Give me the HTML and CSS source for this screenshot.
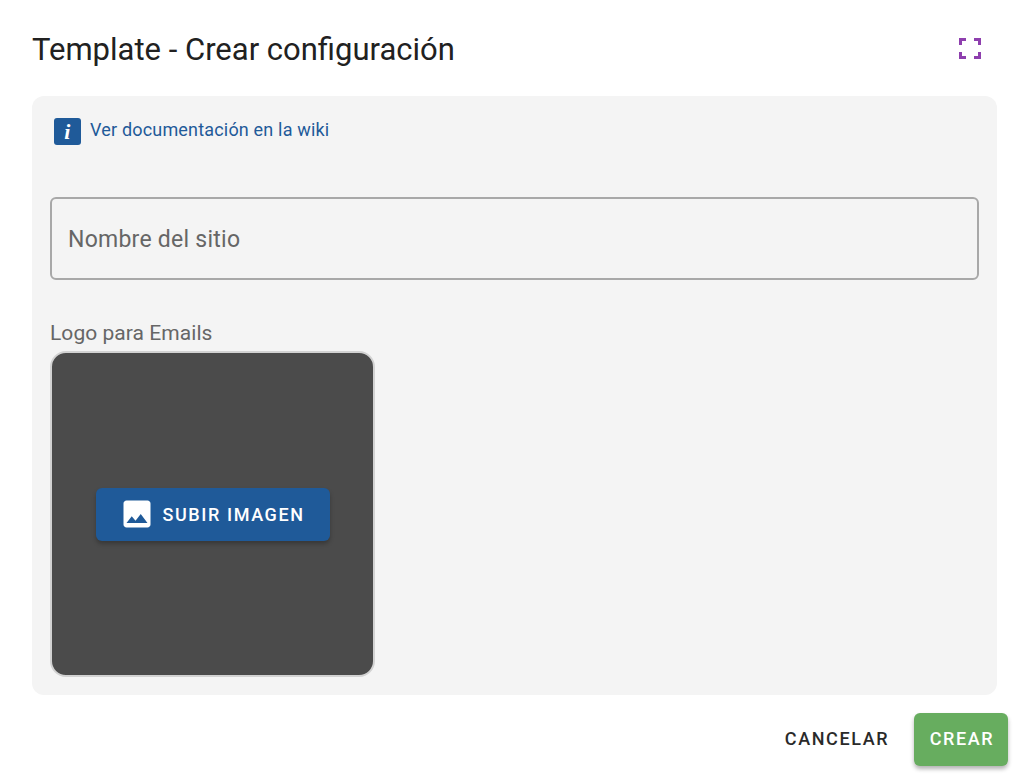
FILE: index.html
```html
<!DOCTYPE html>
<html lang="es">
<head>
<meta charset="utf-8">
<title>Template - Crear configuración</title>
<link rel="stylesheet" href="styles.css">
</head>
<body>
<div class="dialog">
  <header class="title-row">
    <h1 class="title">Template - Crear configuración</h1>
    <svg class="expand" width="22" height="22" viewBox="0 0 22 22" aria-hidden="true">
      <path d="M0 7V0h7v3H3v4zM15 0h7v7h-3V3h-4zM0 14h3v4h4v3H0zM19 14h3v7h-7v-3h4z"/>
    </svg>
  </header>
  <main class="panel">
    <a class="wiki" href="#">
      <span class="info-badge">i</span>
      <span class="wiki-text">Ver documentación en la wiki</span>
    </a>
    <div class="field">Nombre del sitio</div>
    <div class="logo-label">Logo para Emails</div>
    <div class="logo-box">
      <button class="upload" type="button">
        <svg class="upload-icon" width="36" height="36" viewBox="0 0 24 24" aria-hidden="true">
          <path d="M21 19V5c0-1.100-.9-2-2-2H5c-1.100 0-2 .9-2 2v14c0 1.100.9 2 2 2h14c1.100 0 2-.9 2-2zM8.500 13.500l2.500 3 3.500-4.500 4.500 6H5l3.500-4.500z"/>
        </svg>
        <span>SUBIR IMAGEN</span>
      </button>
    </div>
  </main>
  <footer class="actions">
    <button class="btn-text" type="button">CANCELAR</button>
    <button class="btn-create" type="button">CREAR</button>
  </footer>
</div>
</body>
</html>
```
FILE: styles.css
```css
* { box-sizing: border-box; }
html, body { margin: 0; padding: 0; background: #fff; }
body {
  width: 1024px;
  height: 774px;
  overflow: hidden;
  font-family: Roboto, "Liberation Sans", sans-serif;
}
.dialog {
  display: flex;
  flex-direction: column;
  padding: 0 16px 0 32px;
}
.title-row {
  height: 96px;
  display: flex;
  align-items: center;
  justify-content: space-between;
  padding: 2px 27px 0 0;
}
.title {
  margin: 0;
  padding-top: 2px;
  font-size: 31px;
  font-weight: 400;
  line-height: 36px;
  color: #212121;
}
.expand { fill: #8e3fae; }
.panel {
  width: 965px;
  height: 599px;
  background: #f4f4f4;
  border-radius: 12px;
  padding: 22px 18px 18px 18px;
  display: flex;
  flex-direction: column;
}
.wiki {
  display: flex;
  align-items: center;
  gap: 9px;
  margin-left: 4px;
  height: 27px;
  font-size: 18px;
  letter-spacing: .18px;
  color: #1f5a99;
  text-decoration: none;
}
.wiki-text { padding-bottom: 4px; }
.info-badge {
  width: 27px;
  height: 27px;
  border-radius: 3px;
  background: #1f5a99;
  color: #fff;
  font-family: "Liberation Serif", serif;
  font-style: italic;
  font-weight: 700;
  font-size: 22px;
  line-height: 27px;
  text-align: center;
}
.field {
  margin-top: 52px;
  width: 929px;
  height: 83px;
  border: 2px solid #a8a8a8;
  border-radius: 6px;
  padding: 2px 16px 0;
  display: flex;
  align-items: center;
  font-size: 23px;
  letter-spacing: .25px;
  color: #666;
}
.logo-label {
  margin-top: 41px;
  height: 30px;
  line-height: 24px;
  font-size: 21px;
  letter-spacing: .05px;
  color: #666;
}
.logo-box {
  width: 325px;
  height: 326px;
  background: #4b4b4b;
  border: 2px solid #d2d2d2;
  border-radius: 16px;
  display: flex;
  align-items: center;
  justify-content: center;
}
.upload {
  width: 234px;
  height: 53px;
  border: 0;
  border-radius: 6px;
  background: #1f5a99;
  color: #fff;
  font-family: inherit;
  font-size: 18px;
  font-weight: 500;
  letter-spacing: 1.6px;
  display: flex;
  align-items: center;
  justify-content: center;
  gap: 7px;
  padding: 0 1px 0 0;
  box-shadow: 0 3px 4px rgba(0,0,0,.25);
}
.upload-icon { fill: #fff; }
.actions {
  display: flex;
  justify-content: flex-end;
  align-items: center;
  gap: 17px;
  margin-top: 18px;
}
.btn-text, .btn-create {
  height: 53px;
  border: 0;
  border-radius: 6px;
  font-family: inherit;
  font-size: 18px;
  font-weight: 500;
  letter-spacing: 1.6px;
  padding: 0 0 2px;
}
.btn-text {
  width: 120px;
  background: transparent;
  color: #2a2a2a;
}
.btn-create {
  width: 94px;
  background: #67ad5f;
  color: #fff;
  padding-left: 2px;
  box-shadow: 0 3px 4px rgba(0,0,0,.3);
}
```
